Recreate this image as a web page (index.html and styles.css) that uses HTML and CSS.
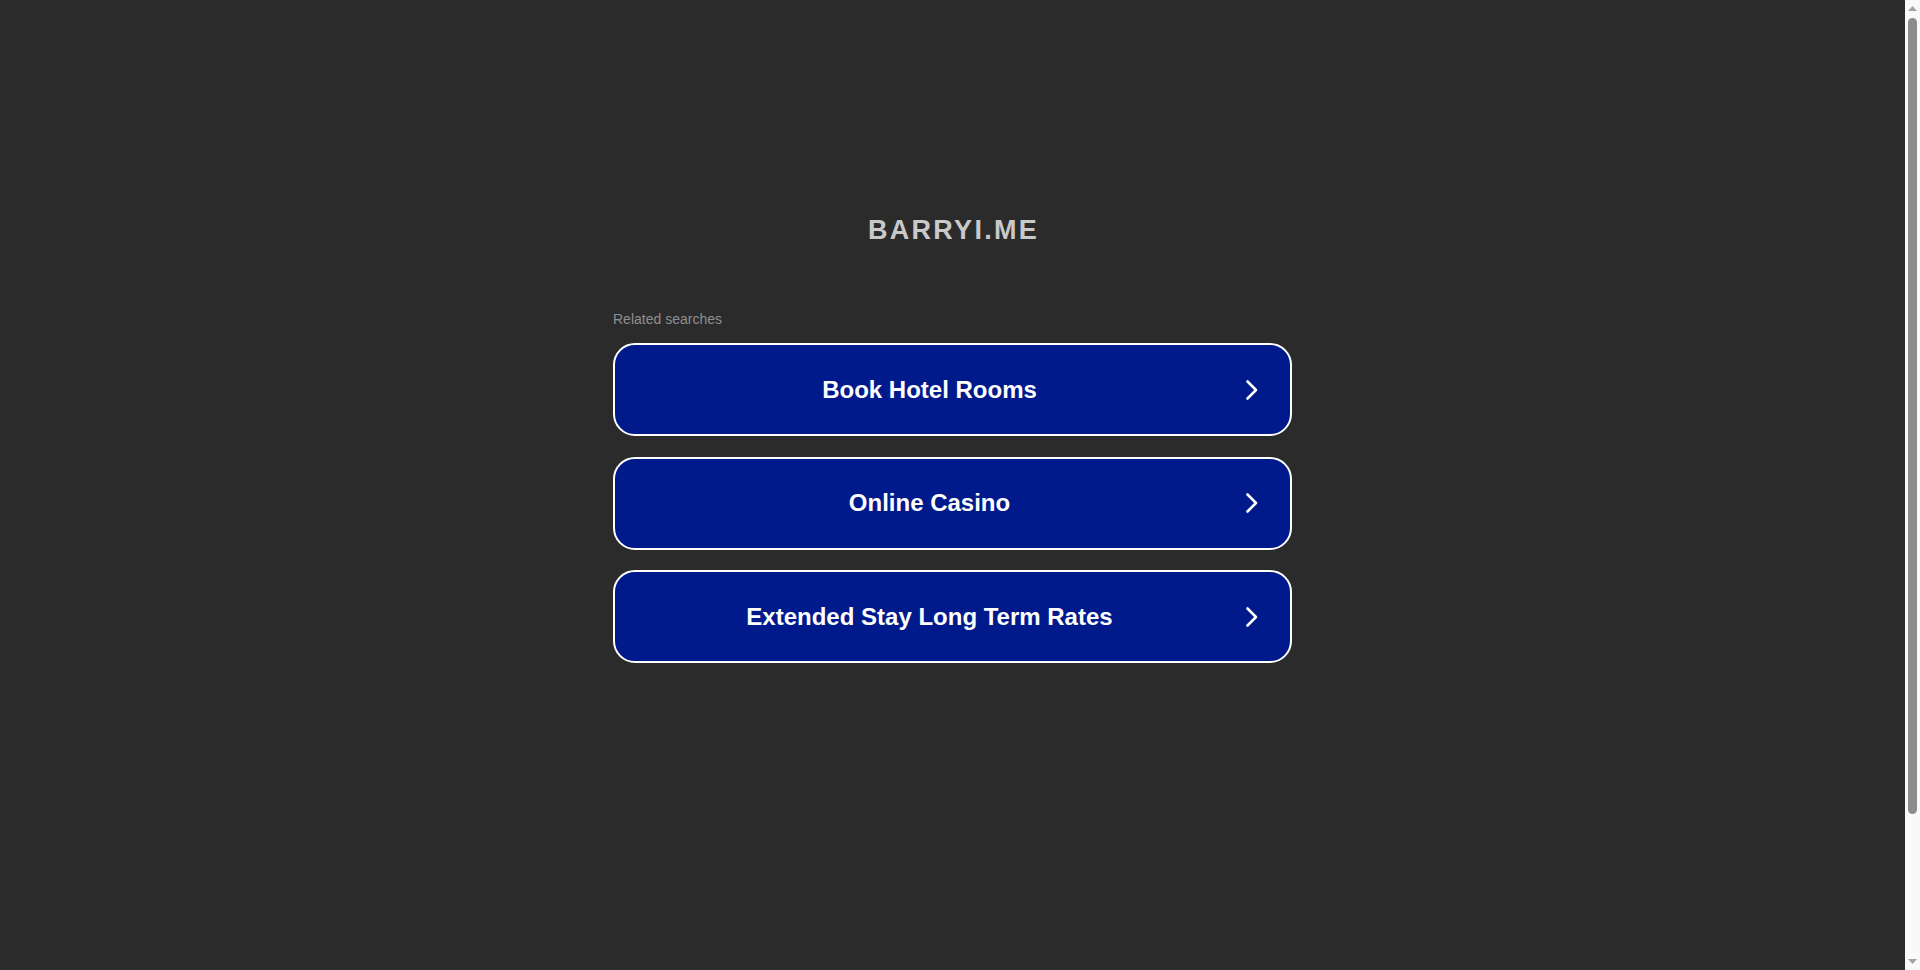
FILE: index.html
```html
<!DOCTYPE html>
<html lang="en">
<head>
<meta charset="utf-8">
<title>barryi.me</title>
<link rel="stylesheet" href="styles.css">
</head>
<body>
<div class="page">
  <h1 class="domain">BARRYI.ME</h1>
  <div class="searches">
    <p class="label">Related searches</p>
    <a class="btn" href="#">
      <span class="btn-text">Book Hotel Rooms</span>
      <span class="btn-arrow"><svg width="14" height="22" viewBox="0 0 14 22"><polyline points="2.5,2.5 11,11 2.5,19.5" fill="none" stroke="#fff" stroke-width="2.6" stroke-linecap="round" stroke-linejoin="round"/></svg></span>
    </a>
    <a class="btn" href="#">
      <span class="btn-text">Online Casino</span>
      <span class="btn-arrow"><svg width="14" height="22" viewBox="0 0 14 22"><polyline points="2.5,2.5 11,11 2.5,19.5" fill="none" stroke="#fff" stroke-width="2.6" stroke-linecap="round" stroke-linejoin="round"/></svg></span>
    </a>
    <a class="btn" href="#">
      <span class="btn-text">Extended Stay Long Term Rates</span>
      <span class="btn-arrow"><svg width="14" height="22" viewBox="0 0 14 22"><polyline points="2.5,2.5 11,11 2.5,19.5" fill="none" stroke="#fff" stroke-width="2.6" stroke-linecap="round" stroke-linejoin="round"/></svg></span>
    </a>
  </div>
</div>
<div class="scrollbar">
  <svg class="sb-arrow" width="15" height="15" viewBox="0 0 15 15"><polygon points="3,11 12,11 7.5,6" fill="#a3a3a3"/></svg>
  <div class="sb-track"><div class="sb-thumb"></div></div>
  <svg class="sb-arrow" width="15" height="15" viewBox="0 0 15 15"><polygon points="3,4 12,4 7.5,9" fill="#a3a3a3"/></svg>
</div>
</body>
</html>
```
FILE: styles.css
```css
html, body {
  margin: 0;
  padding: 0;
  height: 100%;
  overflow: hidden;
  background: #2b2b2b;
  font-family: "Liberation Sans", Arial, sans-serif;
}

body {
  display: flex;
}

.page {
  flex: 1;
  display: flex;
  flex-direction: column;
  align-items: center;
  padding-top: 214px;
  box-sizing: border-box;
}

.domain {
  margin: 0;
  font-size: 27px;
  line-height: 32px;
  font-weight: 700;
  letter-spacing: 2.3px;
  color: #c9c9c9;
  padding-left: 2px;
}

.searches {
  width: 679px;
  margin-top: 65px;
  display: flex;
  flex-direction: column;
  gap: 20.5px;
}

.label {
  margin: 0 0 -4.5px 0;
  font-size: 14px;
  line-height: 16px;
  color: #8f8f8f;
}

.btn {
  display: flex;
  align-items: center;
  height: 93px;
  box-sizing: border-box;
  border: 2px solid #ffffff;
  border-radius: 22px;
  background: #011a8b;
  color: #ffffff;
  text-decoration: none;
  padding: 0 26px 0 4px;
}

.btn-text {
  flex: 1;
  text-align: center;
  font-size: 24px;
  font-weight: 700;
  line-height: 28px;
}

.btn-arrow {
  width: 24px;
  display: flex;
  justify-content: center;
  align-items: center;
}

.scrollbar {
  width: 15px;
  flex: none;
  background: #f9f9f9;
  display: flex;
  flex-direction: column;
}

.sb-arrow {
  display: block;
  flex: none;
}

.sb-track {
  flex: 1;
  padding: 3px 3px 0 3px;
  display: flex;
  flex-direction: column;
}

.sb-thumb {
  height: 796px;
  background: #8c8c8c;
  border-radius: 5px;
}
```
